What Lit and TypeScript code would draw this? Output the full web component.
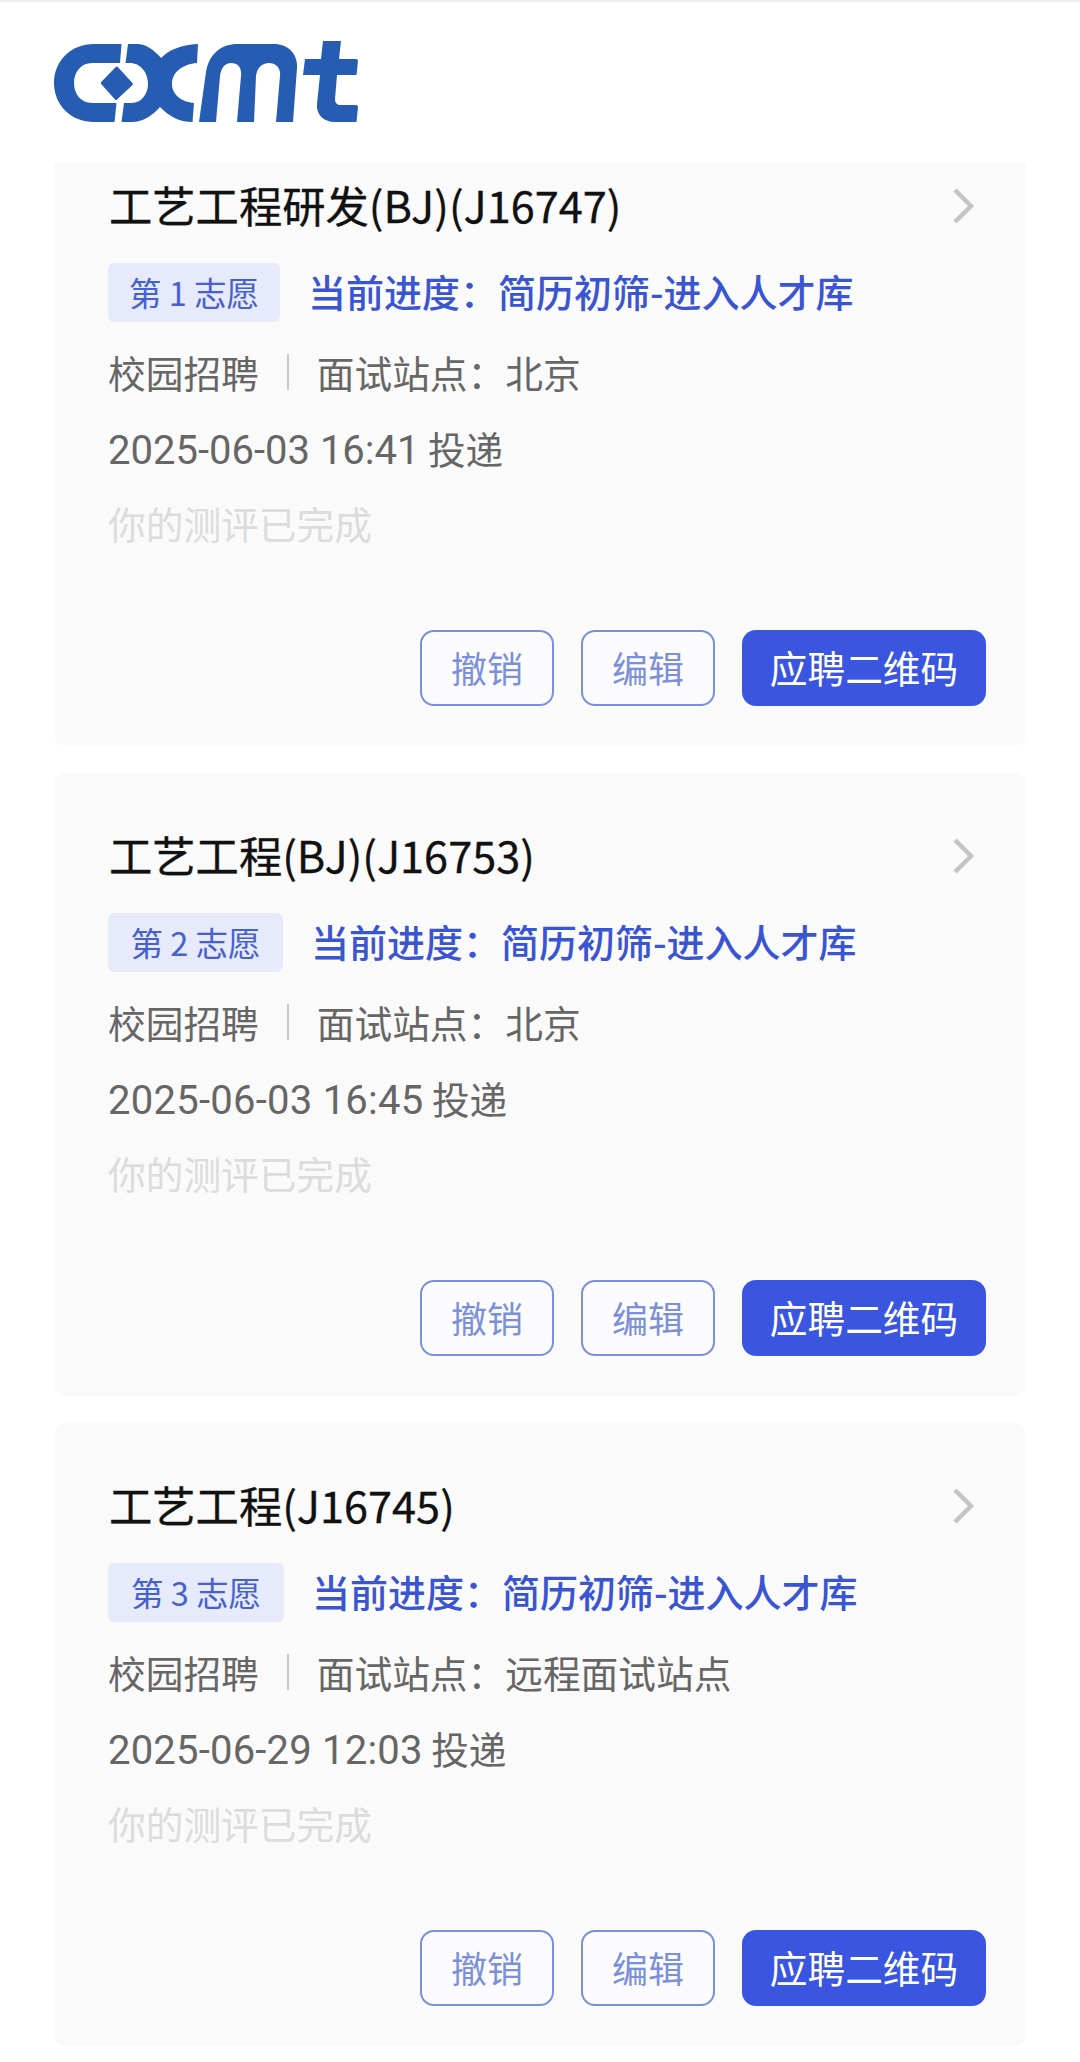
import { LitElement, html, css } from "lit";
import { customElement } from "lit/decorators.js";

const cards = [
  { title: "工艺工程研发(BJ)(J16747)", rank: 1, badge: 172, site: "北京", date: "2025-06-03 16:41", track: 0 },
  { title: "工艺工程(BJ)(J16753)", rank: 2, badge: 175, site: "北京", date: "2025-06-03 16:45", track: 0.25 },
  { title: "工艺工程(J16745)", rank: 3, badge: 176, site: "远程面试站点", date: "2025-06-29 12:03", track: 0.2 },
];

@customElement("app-root")
export class AppRoot extends LitElement {
  static styles = css`
    :host { display: block; width: 1080px; height: 2062px; background: #fff; overflow: hidden;
      font-family: "Noto Sans CJK SC", "Noto Sans", sans-serif; }
    .topline { height: 2px; background: #eeeeee; }
    .header { height: 161px; padding-left: 54px; display: flex; align-items: flex-start; }
    .logo { width: 304px; height: 83px; margin-top: 39px; display: block; }
    .viewport { height: 1899px; overflow: hidden; }
    .list { margin-top: -40px; padding: 0 54px; display: flex; flex-direction: column; gap: 27px; }
    .card { height: 623px; box-sizing: border-box; background: #fafafa; border-radius: 12px; padding: 0 40px 0 55px;
      display: flex; flex-direction: column; }
    .head { height: 166px; display: flex; align-items: center; justify-content: space-between; flex: none; }
    .title { font-size: 43.3px; line-height: 56px; color: #111; margin-bottom: 4px; -webkit-text-stroke: 0.3px #111; }
    .chev { width: 24px; height: 40px; margin-right: 11px; display: block; }
    .status-row { display: flex; align-items: center; gap: 28px; margin-left: -1px; height: 59px; margin-top: -26px; }
    .badge { height: 59px; box-sizing: border-box; background: #e6eafa; border-radius: 6px; color: #4660d0;
      font-size: 32.5px; padding-bottom: 3px; display: flex; align-items: center; justify-content: center; flex: none; }
    .status { font-size: 38px; line-height: 48px; font-weight: 500; color: #3a55d2; margin-bottom: 4px; }
    .meta { font-size: 37.7px; line-height: 48px; color: #666; display: flex; align-items: center; margin: 26px 0 0 -1px; }
    .sep { width: 2px; height: 36px; background: #c8c8c8; margin: 0 28px; }
    .date { font-size: 37.7px; line-height: 48px; color: #666; margin: 28px 0 0 -1px; }
    .nums { font-family: Roboto, sans-serif; font-size: 40px; }
    .faded { font-size: 37.7px; line-height: 48px; color: #dcdcdc; margin: 24px 0 0 -1px; }
    .actions { margin-top: auto; margin-bottom: 40px; display: flex; justify-content: flex-end; gap: 27px; }
    .btn { height: 76px; box-sizing: border-box; border-radius: 14px; display: flex; align-items: center; justify-content: center; padding-bottom: 3px; }
    .outline { width: 134px; border: 2.5px solid #7b90da; color: #7b90da; background: #fbfbfd; font-size: 36px; }
    .solid { width: 244px; background: #3a55e0; color: #fff; font-size: 37.7px; }
  `;

  render() {
    return html`
      <div class="topline"></div>
      <div class="header">
        <svg class="logo" viewBox="54 41 304 83" aria-label="CXMT">
          <g fill="#265db2">
            <path d="M121.5 44 H94 C71 44 54 61 54 83 C54 105 71 122 94 122 H114.5 L116.5 103 H92 C81 103 74 94 74 83 C74 72 81 63 92 63 H120 Z"/>
            <path d="M116.7 66.5 Q117.5 66.5 118 67.2 L132.5 83 Q133 84 132.5 85 L117 99.5 Q116 100.5 115 99.5 L101.2 84 Q100.5 83 101.2 82 L115.5 67.2 Q116 66.5 116.7 66.5 Z"/>
            <path d="M128 44 H137 C146 44 154 50 161 58 C169 50 180 45 198 44 L197 63 C183 64 172 72 172 84 C172 95 182 102 194 103 L192.5 122 C179 122 169 116 160 107 C152 116 142 122 132 122 H121.5 L124 103 H132 C141 103 148 94 148 84 C148 72 140 63 130 63 H125.5 Z"/>
            <path d="M199 122 L206 72 C209 54 221 44 238 44 H274 C289 44 298 55 297 68 L293 122 H276 L280 76 C281 68 276 63 269 63 C262 63 257 68 256 76 L254 122 H237 L241 76 C242 68 238 63 231 63 C225 63 221 68 220 76 L216 122 Z"/>
            <path d="M323 41 H341 L339 59 H356 Q358 59 358 61 L356.5 75 H337 L335 99 C335 103 337 105 341 105 H356 Q358 105 358 107 L356.5 122 H335 C323 122 316 114 317 104 L320 75 H303 L305 59 H321 Z"/>
          </g>
        </svg>
      </div>
      <div class="viewport">
        <div class="list">
          ${cards.map(
            (c) => html`
              <div class="card">
                <div class="head">
                  <div class="title">${c.title}</div>
                  <svg class="chev" viewBox="0 0 24 40"><path d="M4 4 L20 20 L4 36" fill="none" stroke="#c4c4c4" stroke-width="4.5"/></svg>
                </div>
                <div class="status-row">
                  <div class="badge" style="width:${c.badge}px">第 ${c.rank} 志愿</div>
                  <div class="status">当前进度：简历初筛-进入人才库</div>
                </div>
                <div class="meta">校园招聘<span class="sep"></span>面试站点：${c.site}</div>
                <div class="date"><span class="nums" style="letter-spacing:${c.track}px">${c.date}</span> 投递</div>
                <div class="faded">你的测评已完成</div>
                <div class="actions">
                  <div class="btn outline">撤销</div>
                  <div class="btn outline">编辑</div>
                  <div class="btn solid">应聘二维码</div>
                </div>
              </div>
            `
          )}
        </div>
      </div>
    `;
  }
}
